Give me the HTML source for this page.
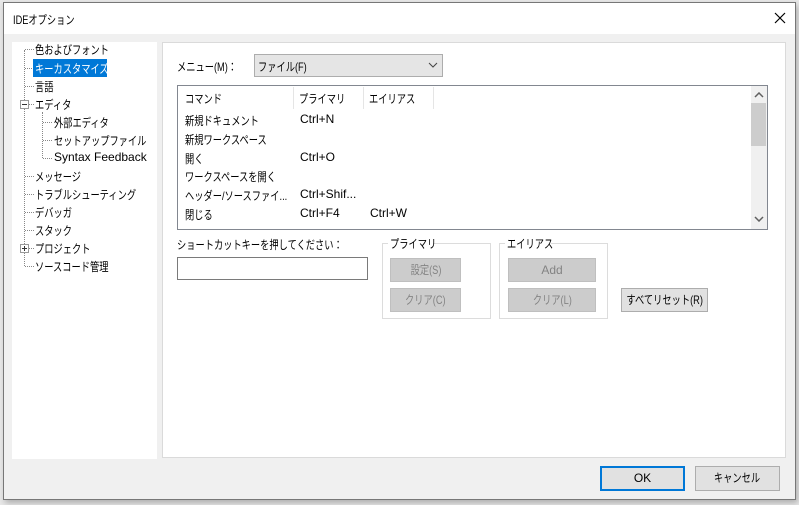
<!DOCTYPE html>
<html><head><meta charset="utf-8"><style>
*{box-sizing:border-box;margin:0;padding:0}
body{width:799px;height:505px;background:#e8e8e8;font-family:"Liberation Sans","Noto Sans CJK JP",sans-serif;font-size:12px;color:#000;position:relative;overflow:hidden}
.a{position:absolute;white-space:nowrap}
.s{transform:scaleX(.77);transform-origin:left top}
.n{display:inline-block;transform:scaleX(.77);transform-origin:center;white-space:nowrap}
.win{position:absolute;left:3px;top:2px;width:793px;height:498px;background:#f0f0f0;border:1px solid #777;box-shadow:2px 3px 6px rgba(0,0,0,.25)}
.title{position:absolute;left:0;top:0;width:100%;height:31px;background:#fff}
.btn{position:absolute;background:#e1e1e1;border:1px solid #adadad;text-align:center;line-height:22px;white-space:nowrap;overflow:visible}
.dis{background:#ccc;border:1px solid #bfbfbf;color:#838383}
.dot{position:absolute;border-color:#888;border-style:dotted;border-width:0}
</style></head><body>
<div class="win">
<div class="title"></div>
<div class="a s" style="left:9px;top:8px">IDEオプション</div>
<svg class="a" style="left:770px;top:9px" width="12" height="12"><path d="M1 1L11 11M11 1L1 11" stroke="#000" stroke-width="1.2"/></svg>
<div class="a" style="left:8px;top:39px;width:145px;height:417px;background:#fff"></div>
<div class="a" style="left:158px;top:39px;width:624px;height:416px;background:#fff;border:1px solid #dadada"></div>
</div>
<div class="dot" style="left:24px;top:50px;height:216px;border-left-width:1px"></div>
<div class="dot" style="left:42px;top:112px;height:46px;border-left-width:1px"></div>
<div class="dot" style="left:25px;top:49px;width:9px;border-top-width:1px"></div>
<div class="dot" style="left:25px;top:68px;width:9px;border-top-width:1px"></div>
<div class="dot" style="left:25px;top:86px;width:9px;border-top-width:1px"></div>
<div class="dot" style="left:25px;top:104px;width:9px;border-top-width:1px"></div>
<div class="dot" style="left:43px;top:122px;width:9px;border-top-width:1px"></div>
<div class="dot" style="left:43px;top:140px;width:9px;border-top-width:1px"></div>
<div class="dot" style="left:43px;top:158px;width:9px;border-top-width:1px"></div>
<div class="dot" style="left:25px;top:176px;width:9px;border-top-width:1px"></div>
<div class="dot" style="left:25px;top:194px;width:9px;border-top-width:1px"></div>
<div class="dot" style="left:25px;top:212px;width:9px;border-top-width:1px"></div>
<div class="dot" style="left:25px;top:230px;width:9px;border-top-width:1px"></div>
<div class="dot" style="left:25px;top:248px;width:9px;border-top-width:1px"></div>
<div class="dot" style="left:25px;top:266px;width:9px;border-top-width:1px"></div>
<div class="a" style="left:20px;top:100px;width:9px;height:9px;border:1px solid #999;background:#fff"><div class="a" style="left:1px;top:3px;width:5px;height:1px;background:#333"></div></div>
<div class="a" style="left:20px;top:244px;width:9px;height:9px;border:1px solid #999;background:#fff"><div class="a" style="left:1px;top:3px;width:5px;height:1px;background:#333"></div><div class="a" style="left:3px;top:1px;width:1px;height:5px;background:#333"></div></div>
<div class="a s" style="left:35px;top:41px">色およびフォント</div>
<div class="a" style="left:33px;top:59px;background:#0078d7;width:74px;height:18px"></div>
<div class="a s" style="left:35px;top:60px;color:#fff">キーカスタマイズ</div>
<div class="a s" style="left:35px;top:78px">言語</div>
<div class="a s" style="left:35px;top:96px">エディタ</div>
<div class="a s" style="left:54px;top:114px">外部エディタ</div>
<div class="a s" style="left:54px;top:132px">セットアップファイル</div>
<div class="a" style="left:54px;top:150px">Syntax Feedback</div>
<div class="a s" style="left:35px;top:168px">メッセージ</div>
<div class="a s" style="left:35px;top:186px">トラブルシューティング</div>
<div class="a s" style="left:35px;top:204px">デバッガ</div>
<div class="a s" style="left:35px;top:222px">スタック</div>
<div class="a s" style="left:35px;top:240px">プロジェクト</div>
<div class="a s" style="left:35px;top:258px">ソースコード管理</div>
<div class="a s" style="left:177px;top:58px">メニュー(M)：</div>
<div class="a" style="left:254px;top:54px;width:189px;height:23px;background:#e5e5e5;border:1px solid #adadad"></div>
<div class="a s" style="left:258px;top:58px">ファイル(F)</div>
<svg class="a" style="left:428px;top:62px" width="10" height="6"><path d="M1 1L5 5L9 1" fill="none" stroke="#444"/></svg>
<div class="a" style="left:177px;top:85px;width:591px;height:145px;background:#fff;border:1px solid #828790"></div>
<div class="a" style="left:293px;top:87px;width:1px;height:22px;background:#e5e5e5"></div>
<div class="a" style="left:363px;top:87px;width:1px;height:22px;background:#e5e5e5"></div>
<div class="a" style="left:433px;top:87px;width:1px;height:22px;background:#e5e5e5"></div>
<div class="a" style="left:751px;top:86px;width:16px;height:143px;background:#f0f0f0"></div>
<div class="a" style="left:751px;top:103px;width:15px;height:43px;background:#cdcdcd"></div>
<svg class="a" style="left:754px;top:92px" width="10" height="6"><path d="M1 5L5 1L9 5" fill="none" stroke="#606060" stroke-width="1.5"/></svg>
<svg class="a" style="left:754px;top:216px" width="10" height="6"><path d="M1 1L5 5L9 1" fill="none" stroke="#606060" stroke-width="1.5"/></svg>
<div class="a s" style="left:185px;top:90px">コマンド</div>
<div class="a s" style="left:299px;top:90px">プライマリ</div>
<div class="a s" style="left:369px;top:90px">エイリアス</div>
<div class="a s" style="left:185px;top:112px">新規ドキュメント</div><div class="a" style="left:300px;top:112px">Ctrl+N</div>
<div class="a s" style="left:185px;top:131px">新規ワークスペース</div>
<div class="a s" style="left:185px;top:150px">開く</div><div class="a" style="left:300px;top:150px">Ctrl+O</div>
<div class="a s" style="left:185px;top:168px">ワークスペースを開く</div>
<div class="a s" style="left:185px;top:187px">ヘッダー/ソースファイ...</div><div class="a" style="left:300px;top:187px">Ctrl+Shif...</div>
<div class="a s" style="left:185px;top:206px">閉じる</div><div class="a" style="left:300px;top:206px">Ctrl+F4</div><div class="a" style="left:370px;top:206px">Ctrl+W</div>
<div class="a s" style="left:177px;top:236px">ショートカットキーを押してください：</div>
<div class="a" style="left:177px;top:257px;width:191px;height:23px;background:#fff;border:1px solid #7a7a7a"></div>
<div class="a" style="left:382px;top:243px;width:109px;height:76px;border:1px solid #dcdcdc"></div>
<div class="a" style="left:388px;top:236px;background:#fff;width:45px;height:14px"></div>
<div class="a s" style="left:390px;top:235px">プライマリ</div>
<div class="btn dis" style="left:390px;top:258px;width:71px;height:24px"><span class="n">設定(S)</span></div>
<div class="btn dis" style="left:390px;top:288px;width:71px;height:24px"><span class="n">クリア(C)</span></div>
<div class="a" style="left:499px;top:243px;width:109px;height:76px;border:1px solid #dcdcdc"></div>
<div class="a" style="left:505px;top:236px;background:#fff;width:46px;height:14px"></div>
<div class="a s" style="left:507px;top:235px">エイリアス</div>
<div class="btn dis" style="left:508px;top:258px;width:88px;height:24px">Add</div>
<div class="btn dis" style="left:508px;top:288px;width:88px;height:24px"><span class="n">クリア(L)</span></div>
<div class="btn" style="left:621px;top:288px;width:87px;height:24px"><span class="n" style="margin:0 -20px">すべてリセット(R)</span></div>
<div class="btn" style="left:600px;top:466px;width:85px;height:25px;border:2px solid #0078d7;line-height:21px">OK</div>
<div class="btn" style="left:695px;top:466px;width:85px;height:25px"><span class="n">キャンセル</span></div>
</body></html>
